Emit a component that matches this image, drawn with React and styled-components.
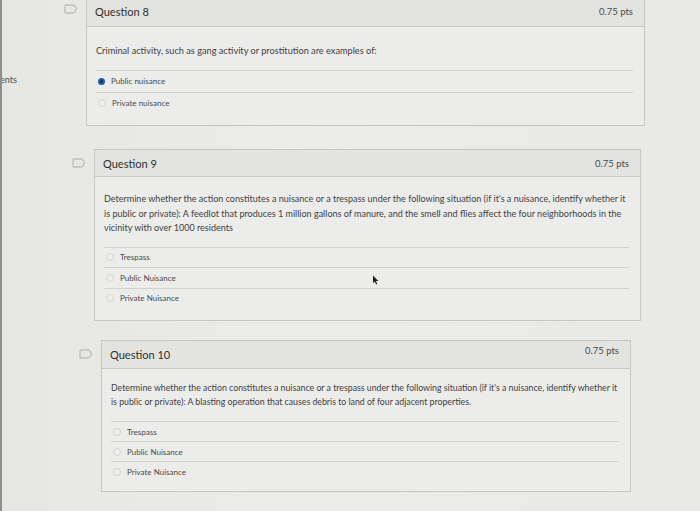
import React from 'react'
import styled, { createGlobalStyle } from 'styled-components'

const GlobalStyle = createGlobalStyle`
    html, body {
        margin: 0;
        padding: 0;
        background-color: #e9e9e6;
        font-family: Lato, "Open Sans", sans-serif;
    }
`

// the photo is taken at a slight angle, so each card has its own scale
const questions = [
    {
        id: 8,
        indent: 4,
        width: 559,
        top: -5,
        headerHeight: 30,
        text: 'Criminal activity, such as gang activity or prostitution are examples of:',
        fontSize: 9.2,
        padTop: 17,
        lineHeight: 14,
        textGap: 12,
        rowHeight: 20.5,
        answers: ['Public nuisance', 'Private nuisance'],
        selected: 0,
        bottom: 12,
    },
    {
        id: 9,
        indent: 12,
        width: 547,
        top: 23,
        headerHeight: 26,
        text: "Determine whether the action constitutes a nuisance or a trespass under the following situation (if it's a nuisance, identify whether it is public or private): A feedlot that produces 1 million gallons of manure, and the smell and flies affect the four neighborhoods in the vicinity with over 1000 residents",
        fontSize: 9.03,
        padTop: 15,
        lineHeight: 14.5,
        textGap: 11,
        rowHeight: 19.5,
        answers: ['Trespass', 'Public Nuisance', 'Private Nuisance'],
        selected: -1,
        bottom: 12,
        cursor: true,
    },
    {
        id: 10,
        indent: 19,
        width: 530,
        top: 19,
        headerHeight: 27,
        text: "Determine whether the action constitutes a nuisance or a trespass under the following situation (if it's a nuisance, identify whether it is public or private): A blasting operation that causes debris to land of four adjacent properties.",
        fontSize: 8.75,
        padTop: 12,
        lineHeight: 13.5,
        textGap: 13,
        rowHeight: 19,
        answers: ['Trespass', 'Public Nuisance', 'Private Nuisance'],
        selected: -1,
        bottom: 10,
        pointsLift: 4,
    },
]

function FlagIcon() {
    return (
        <svg width="14" height="10" viewBox="0 0 14 10" fill="none">
            <path
                d="M2 1 H9 Q10.5 1 11.5 3 L12.5 5 L11.5 7 Q10.5 9 9 9 H2 Q1 9 1 8 V2 Q1 1 2 1 Z"
                stroke="#bfbfbc"
                strokeWidth="1.4"
                strokeLinejoin="round"
            />
        </svg>
    )
}

function Cursor() {
    return (
        <StCursor width="7" height="10" viewBox="0 0 7 10">
            <path d="M1 0.5 L1 8 L2.8 6.4 L4.2 9.5 L5.2 9 L3.9 6 L6.3 6 Z" fill="#1e1e1e" />
        </StCursor>
    )
}

function Question({ q }) {
    return (
        <StRow $indent={q.indent} $top={q.top}>
            <StFlag>
                <FlagIcon />
            </StFlag>
            <StCard $width={q.width}>
                <StHeader $height={q.headerHeight}>
                    <StTitle>Question {q.id}</StTitle>
                    <StPoints $lift={q.pointsLift || 0}>0.75 pts</StPoints>
                </StHeader>
                <StBody $padTop={q.padTop} $bottom={q.bottom}>
                    <StText $size={q.fontSize} $lineHeight={q.lineHeight} $gap={q.textGap}>
                        {q.text}
                    </StText>
                    <StAnswers>
                        {q.answers.map((a, i) => (
                            <StAnswer key={a} $height={q.rowHeight}>
                                <StRadio $checked={i === q.selected} />
                                <StLabel>{a}</StLabel>
                            </StAnswer>
                        ))}
                    </StAnswers>
                    {q.cursor && <Cursor />}
                </StBody>
            </StCard>
        </StRow>
    )
}

export default function App() {
    return (
        <>
            <GlobalStyle />
            <StPage>
                <StSidebar>
                    <StSideText>ents</StSideText>
                </StSidebar>
                <StMain>
                    {questions.map((q) => (
                        <Question key={q.id} q={q} />
                    ))}
                </StMain>
            </StPage>
        </>
    )
}

const StPage = styled.div`
    display: flex;
    width: 700px;
    height: 511px;
    overflow: hidden;
    box-sizing: border-box;
    border-left: 2px solid #8e8e8c;
    background: linear-gradient(90deg, #e6e6e3 0%, #ebebe8 40%, #e9e9e6 100%);
`

const StSidebar = styled.div`
    width: 58px;
    flex-shrink: 0;
    padding-top: 74px;
`

const StSideText = styled.div`
    font-size: 9px;
    color: #4e4e4e;
    margin-left: -2px;
`

const StMain = styled.div`
    display: flex;
    flex-direction: column;
`

const StRow = styled.div`
    display: flex;
    align-items: flex-start;
    padding-left: ${(p) => p.$indent}px;
    margin-top: ${(p) => p.$top}px;
`

const StFlag = styled.div`
    width: 22px;
    flex-shrink: 0;
    padding-top: 9px;
    display: flex;
`

const StCard = styled.div`
    width: ${(p) => p.$width}px;
    border: 1px solid #c6c6c3;
    background-color: #ececea;
    box-sizing: border-box;
`

const StHeader = styled.div`
    height: ${(p) => p.$height}px;
    display: flex;
    align-items: center;
    justify-content: space-between;
    padding: 0 11px 0 8px;
    background-color: #e3e3e0;
    border-bottom: 1px solid #c9c9c6;
`

const StTitle = styled.div`
    font-size: 11px;
    color: #2f2f2f;
`

const StPoints = styled.div`
    font-size: 9.5px;
    color: #4a4a4a;
    margin-top: -${(p) => p.$lift * 2}px;
`

const StBody = styled.div`
    position: relative;
    padding: ${(p) => p.$padTop}px 11px ${(p) => p.$bottom}px 9px;
`

const StText = styled.div`
    font-size: ${(p) => p.$size}px;
    line-height: ${(p) => p.$lineHeight}px;
    color: #3f3f3f;
    padding-bottom: ${(p) => p.$gap}px;
    border-bottom: 1px solid #d2d2cf;
`

const StAnswers = styled.div`
    display: flex;
    flex-direction: column;
`

const StAnswer = styled.div`
    display: flex;
    align-items: center;
    gap: 6px;
    height: ${(p) => p.$height}px;
    padding-left: 2px;
    &:not(:last-child) {
        border-bottom: 1px solid #d2d2cf;
    }
`

const StRadio = styled.span`
    width: ${(p) => (p.$checked ? 3 : 6)}px;
    height: ${(p) => (p.$checked ? 3 : 6)}px;
    border-radius: 50%;
    border: ${(p) => (p.$checked ? '2px solid #1d5fa8' : '1px solid #d3d3d0')};
    background-color: ${(p) => (p.$checked ? '#1f2f44' : '#efefed')};
    flex-shrink: 0;
`

const StLabel = styled.span`
    font-size: 8px;
    color: #4a4a4a;
`

const StCursor = styled.svg`
    position: absolute;
    left: 277px;
    top: 98px;
`
